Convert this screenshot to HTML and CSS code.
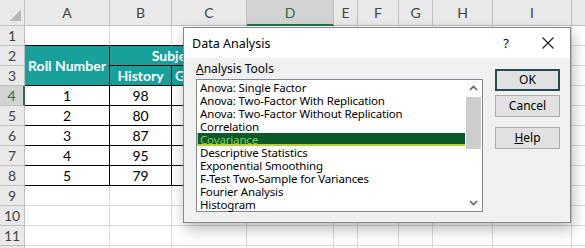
FILE: index.html
```html
<!DOCTYPE html>
<html>
<head>
    <meta charset="UTF-8">
    <title>Data Analysis</title>
    <link rel="stylesheet" href="styles.css">
</head>
<body>
<div class="sheet">
    <table class="grid">
        <colgroup>
            <col class="c-rh"><col class="c-a"><col class="c-b"><col class="c-c"><col class="c-d">
            <col class="c-e"><col class="c-f"><col class="c-g"><col class="c-h"><col class="c-i"><col class="c-j">
        </colgroup>
        <tr class="colHead">
            <th class="corner"></th>
            <th>A</th><th>B</th><th>C</th><th class="on">D</th><th>E</th>
            <th>F</th><th>G</th><th>H</th><th>I</th><th></th>
        </tr>
        <tr>
            <th class="rh">1</th>
            <td class="topEdge"></td><td class="topEdge"></td><td class="topEdge"></td>
            <td></td><td></td><td></td><td></td><td></td><td></td><td></td>
        </tr>
        <tr>
            <th class="rh">2</th>
            <td class="head" rowspan="2">Roll Number</td>
            <td class="head" colspan="2">Subjects</td>
            <td></td><td></td><td></td><td></td><td></td><td></td><td></td>
        </tr>
        <tr>
            <th class="rh">3</th>
            <td class="head">History</td>
            <td class="head">Geography</td>
            <td></td><td></td><td></td><td></td><td></td><td></td><td></td>
        </tr>
        <tr>
            <th class="rh on">4</th>
            <td class="data">1</td><td class="data">98</td><td class="data"></td>
            <td></td><td></td><td></td><td></td><td></td><td></td><td></td>
        </tr>
        <tr>
            <th class="rh">5</th>
            <td class="data">2</td><td class="data">80</td><td class="data"></td>
            <td></td><td></td><td></td><td></td><td></td><td></td><td></td>
        </tr>
        <tr>
            <th class="rh">6</th>
            <td class="data">3</td><td class="data">87</td><td class="data"></td>
            <td></td><td></td><td></td><td></td><td></td><td></td><td></td>
        </tr>
        <tr>
            <th class="rh">7</th>
            <td class="data">4</td><td class="data">95</td><td class="data"></td>
            <td></td><td></td><td></td><td></td><td></td><td></td><td></td>
        </tr>
        <tr>
            <th class="rh">8</th>
            <td class="data">5</td><td class="data">79</td><td class="data"></td>
            <td></td><td></td><td></td><td></td><td></td><td></td><td></td>
        </tr>
        <tr>
            <th class="rh">9</th>
            <td></td><td></td><td></td><td></td><td></td><td></td><td></td><td></td><td></td><td></td>
        </tr>
        <tr>
            <th class="rh">10</th>
            <td></td><td></td><td></td><td></td><td></td><td></td><td></td><td></td><td></td><td></td>
        </tr>
        <tr>
            <th class="rh">11</th>
            <td></td><td></td><td></td><td></td><td></td><td></td><td></td><td></td><td></td><td></td>
        </tr>
        <tr>
            <th class="rh"></th>
            <td></td><td></td><td></td><td></td><td></td><td></td><td></td><td></td><td></td><td></td>
        </tr>
    </table>

    <!-- dialog sits over the sheet -->
    <div class="dialog">
        <div class="titleBar">
            <span class="title">Data Analysis</span>
            <span class="help">?</span>
            <svg class="close" width="12" height="12" viewBox="0 0 12 12">
                <path d="M0.5 0.5 L11.5 11.5 M11.5 0.5 L0.5 11.5" stroke="#1a1a1a" stroke-width="1.1" fill="none"/>
            </svg>
        </div>
        <div class="dlgBody">
            <div class="toolsCol">
                <div class="label"><u>A</u>nalysis Tools</div>
                <div class="listBox">
                    <ul class="items">
                        <li>Anova: Single Factor</li>
                        <li>Anova: Two-Factor With Replication</li>
                        <li>Anova: Two-Factor Without Replication</li>
                        <li>Correlation</li>
                        <li class="sel">Covariance</li>
                        <li>Descriptive Statistics</li>
                        <li>Exponential Smoothing</li>
                        <li>F-Test Two-Sample for Variances</li>
                        <li>Fourier Analysis</li>
                        <li>Histogram</li>
                    </ul>
                    <div class="scroll">
                        <svg class="arrow" width="17" height="17" viewBox="0 0 17 17">
                            <path d="M5 10 L8.5 6.5 L12 10" stroke="#606060" stroke-width="1.6" fill="none"/>
                        </svg>
                        <div class="thumb"></div>
                        <div class="track"></div>
                        <svg class="arrow" width="17" height="17" viewBox="0 0 17 17">
                            <path d="M5 7 L8.5 10.5 L12 7" stroke="#606060" stroke-width="1.6" fill="none"/>
                        </svg>
                    </div>
                </div>
            </div>
            <div class="btnCol">
                <div class="btn def">OK</div>
                <div class="btn">Cancel</div>
                <div class="btn gapTop"><u>H</u>elp</div>
            </div>
        </div>
    </div>
</div>
</body>
</html>
```

FILE: styles.css
```css
* {
    margin: 0;
    padding: 0;
}

body {
    width: 585px;
    height: 248px;
    overflow: hidden;
    background: #fff;
}

ul, li {
    list-style: none;
}

.sheet {
    position: relative;
    width: 585px;
    height: 248px;
    overflow: hidden;
}

/* spreadsheet */
.grid {
    table-layout: fixed;
    border-collapse: separate;
    border-spacing: 0;
    width: 665px;
    font-family: Lato, "Liberation Sans", sans-serif;
    font-size: 14px;
    color: #000;
}

.c-rh { width: 25px; }
.c-a { width: 85px; }
.c-b { width: 62px; }
.c-c { width: 75px; }
.c-d { width: 87px; }
.c-e { width: 24px; }
.c-f { width: 41px; }
.c-g { width: 34px; }
.c-h { width: 60px; }
.c-i { width: 79px; }
.c-j { width: 93px; }

.grid td,
.grid th {
    box-sizing: border-box;
    height: 20px;
    padding: 0;
    border-right: 1px solid #d9d9d9;
    border-bottom: 1px solid #d9d9d9;
    text-align: center;
    white-space: nowrap;
    overflow: hidden;
}

.grid th {
    font-weight: normal;
    color: #444;
    background: #e9e9e9;
    border-right-color: #bfbfbf;
    border-bottom-color: #bfbfbf;
}

.colHead th {
    height: 26px;
    font-size: 14px;
}

.colHead th.corner {
    background: #e9e9e9 linear-gradient(to bottom right, transparent 50%, #b8b8b8 50%) no-repeat right 3px bottom 4px / 12px 11px;
}

.colHead th.on {
    background: #d3d3d3;
    color: #2f6b45;
    border-bottom: 2px solid #217346;
}

.grid th.rh {
    font-size: 14px;
}

.grid th.rh.on {
    background: #d3d3d3;
    color: #2f6b45;
    border-right: 2px solid #217346;
}

.grid td.topEdge {
    border-bottom-color: #000;
}

.grid td.head {
    background: #18a09b;
    color: #fff;
    font-weight: bold;
    font-size: 14px;
    border-right-color: #000;
    border-bottom-color: #000;
}

.grid td.data {
    border-right-color: #000;
    border-bottom-color: #000;
}

/* dialog */
.dialog {
    position: absolute;
    left: 183px;
    top: 27px;
    width: 388px;
    height: 196px;
    box-sizing: border-box;
    border: 1px solid #888;
    background: #f0f0f0;
    box-shadow: 2px 6px 14px rgba(0, 0, 0, 0.28);
    font-family: "Noto Sans", "Liberation Sans", sans-serif;
    font-size: 11.5px;
    color: #000;
}

.titleBar {
    display: flex;
    align-items: center;
    height: 30px;
    padding-left: 8px;
    background: #fff;
    font-size: 12.5px;
}

.titleBar .title {
    flex: 1;
}

.titleBar .help {
    margin-right: 33px;
    font-size: 13px;
}

.titleBar .close {
    margin-right: 16px;
}

.dlgBody {
    display: flex;
    padding: 3px 0 0 12px;
}

.label {
    height: 18px;
    line-height: 15px;
    font-size: 12px;
}

.listBox {
    display: flex;
    width: 287px;
    height: 133px;
    box-sizing: border-box;
    border: 1px solid #828790;
    background: #fff;
}

.items {
    flex: 1;
    padding-top: 1px;
}

.items li {
    height: 13px;
    line-height: 13px;
    padding-left: 3px;
    letter-spacing: -0.15px;
    white-space: nowrap;
}

.items li.sel {
    background: #0c5a2c;
    color: #86c957;
    box-shadow: inset 0 -2px 0 #b3cf3d, inset 1px 0 0 #b3cf3d;
}

.scroll {
    display: flex;
    flex-direction: column;
    width: 17px;
    background: #fff;
}

.scroll .arrow {
    display: block;
}

.scroll .thumb {
    height: 52px;
    margin: 0 1px;
    background: #cdcdcd;
}

.scroll .track {
    flex: 1;
}

.btnCol {
    display: flex;
    flex-direction: column;
    gap: 4px;
    margin: 8px 0 0 12px;
}

.btn {
    width: 65px;
    height: 22px;
    box-sizing: border-box;
    border: 1px solid #adadad;
    background: #e1e1e1;
    text-align: center;
    line-height: 19px;
    font-size: 12px;
}

.btn.def {
    border: 2px solid #1d4f50;
    line-height: 17px;
}

.btn.gapTop {
    margin-top: 6px;
}
```
